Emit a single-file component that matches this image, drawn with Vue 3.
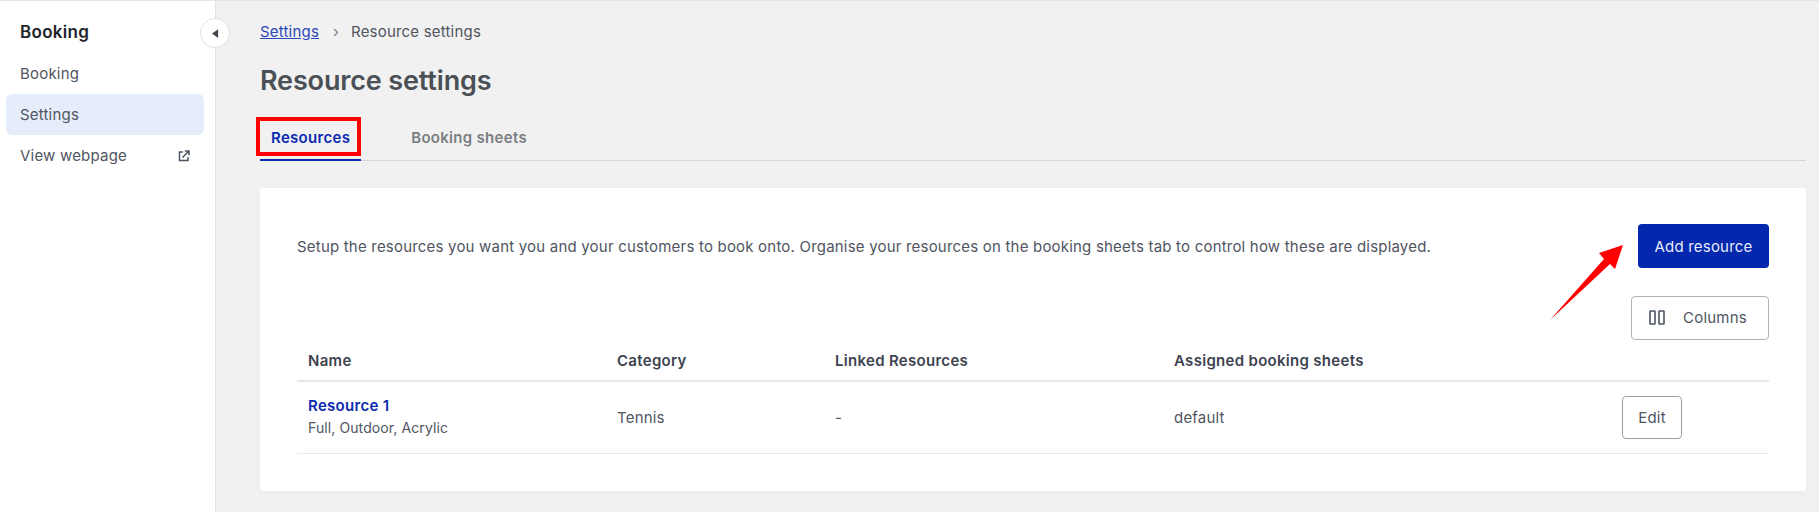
<script setup>
const navItems = [
  { label: 'Booking' },
  { label: 'Settings', active: true },
  { label: 'View webpage', external: true },
]
</script>

<template>
  <div class="page">
    <aside class="sidebar">
      <div class="side-title">Booking</div>
      <nav class="nav">
        <a v-for="item in navItems" :key="item.label" class="nav-item" :class="{ active: item.active }">
          <span>{{ item.label }}</span>
          <svg v-if="item.external" class="ext" viewBox="0 0 12 12" width="12" height="12">
            <path d="M5 2H1.5v8.5H10V7" fill="none" stroke="#4b5563" stroke-width="1.5" />
            <path d="M4.5 7.5 10.5 1.5M6.8 1h4.2v4.2" fill="none" stroke="#4b5563" stroke-width="1.5" />
          </svg>
        </a>
      </nav>
      <button class="collapse">
        <svg viewBox="0 0 8 10" width="7" height="9"><path d="M7 0v10L0 5z" fill="#3f4650" /></svg>
      </button>
    </aside>

    <main class="main">
      <div class="crumbs">
        <a class="crumb-link">Settings</a>
        <span class="sep">›</span>
        <span>Resource settings</span>
      </div>
      <h1>Resource settings</h1>

      <div class="tabs">
        <div class="tab current">
          Resources
          <span class="red-box"></span>
        </div>
        <div class="tab">Booking sheets</div>
      </div>

      <section class="card">
        <div class="intro">
          <p>Setup the resources you want you and your customers to book onto. Organise your resources on the booking sheets tab to control how these are displayed.</p>
          <button class="btn-primary">Add resource</button>
        </div>
        <div class="tools">
          <button class="btn-columns">
            <svg viewBox="0 0 16 15" width="16" height="15">
              <rect x="1" y="1" width="5" height="13" rx="0.5" fill="none" stroke="#4b5563" stroke-width="1.6" />
              <rect x="10" y="1" width="5" height="13" rx="0.5" fill="none" stroke="#4b5563" stroke-width="1.6" />
            </svg>
            <span>Columns</span>
          </button>
        </div>
        <table>
          <colgroup>
            <col class="c1" /><col class="c2" /><col class="c3" /><col class="c4" /><col />
          </colgroup>
          <thead>
            <tr>
              <th>Name</th>
              <th>Category</th>
              <th>Linked Resources</th>
              <th>Assigned booking sheets</th>
              <th></th>
            </tr>
          </thead>
          <tbody>
            <tr>
              <td class="name-cell">
                <a class="res-name">Resource 1</a>
                <div class="res-sub">Full, Outdoor, Acrylic</div>
              </td>
              <td>Tennis</td>
              <td>-</td>
              <td>default</td>
              <td class="edit-cell"><button class="btn-edit">Edit</button></td>
            </tr>
          </tbody>
        </table>
      </section>
    </main>

    <!-- annotation drawn on top of the screenshot -->
    <svg class="arrow" viewBox="0 0 90 90" width="90" height="90">
      <path d="M0 86 54 25 49 19 73 11 65 35 60 30Z" fill="#ff0000" />
    </svg>
  </div>
</template>

<style>
html, body {
  margin: 0;
  background: #f1f1f1;
}
</style>

<style scoped>
.page {
  position: relative;
  display: flex;
  height: 512px;
  box-sizing: border-box;
  border-top: 1px solid #e4e4e4;
  font-family: Inter, "Liberation Sans", sans-serif;
  font-size: 15px;
  letter-spacing: 0.2px;
  color: #50555f;
  background: #f1f1f1;
  overflow: hidden;
}
.sidebar {
  position: relative;
  flex: 0 0 215px;
  background: #fff;
  border-right: 1px solid #dfe3e8;
}
.side-title {
  padding: 21px 20px 0;
  font-size: 17px;
  line-height: 20px;
  font-weight: 600;
  letter-spacing: 0.3px;
  color: #20242a;
}
.nav {
  display: flex;
  flex-direction: column;
  margin-top: 11px;
  padding: 0 11px 0 6px;
}
.nav-item {
  display: flex;
  align-items: center;
  justify-content: space-between;
  height: 41px;
  padding: 0 14px;
  border-radius: 6px;
}
.nav-item.active {
  background: #e5ecfa;
}
.collapse {
  position: absolute;
  top: 17px;
  right: -15px;
  width: 30px;
  height: 30px;
  padding: 0;
  display: flex;
  align-items: center;
  justify-content: center;
  background: #fff;
  border: 1px solid #dfe3e8;
  border-radius: 50%;
}
.main {
  flex: 1;
  padding: 21px 13px 0 44px;
  min-width: 0;
}
.crumbs {
  display: flex;
  align-items: center;
  line-height: 20px;
}
.crumb-link {
  color: #2a47b8;
  text-decoration: underline;
}
.sep {
  margin: 0 12px 0 14px;
  color: #7b8088;
}
h1 {
  margin: 21px 0 0;
  font-size: 27px;
  line-height: 36px;
  font-weight: 600;
  letter-spacing: -0.15px;
  color: #4a5055;
}
.tabs {
  display: flex;
  margin-top: 18px;
  border-bottom: 1px solid #d4d6da;
}
.tab {
  position: relative;
  padding: 0 34px 0 11px;
  height: 44px;
  line-height: 41px;
  font-weight: 600;
  letter-spacing: 0.3px;
  color: #7a7d82;
  margin-bottom: -1px;
  box-sizing: border-box;
}
.tab + .tab {
  padding-left: 16px;
}
.tab.current {
  padding-right: 11px;
  margin-right: 34px;
  color: #0a2bb0;
  border-bottom: 2px solid #0a2bb0;
}
.red-box {
  position: absolute;
  left: -4px;
  top: 0;
  right: 0;
  height: 39px;
  box-sizing: border-box;
  border: 4px solid #f00;
}
.card {
  margin-top: 27px;
  height: 303px;
  box-sizing: border-box;
  padding: 36px 37px 0;
  background: #fff;
  border-radius: 4px;
  box-shadow: 0 4px 12px rgba(0, 0, 0, 0.025);
}
.intro {
  display: flex;
  align-items: center;
  justify-content: space-between;
}
.intro p {
  margin: 0;
}
button {
  font: inherit;
  letter-spacing: inherit;
  cursor: pointer;
}
.btn-primary {
  width: 131px;
  height: 44px;
  background: #0327ad;
  color: #e6eaf8;
  border: none;
  border-radius: 4px;
}
.tools {
  display: flex;
  justify-content: flex-end;
  margin-top: 28px;
}
.btn-columns {
  display: flex;
  align-items: center;
  justify-content: center;
  gap: 18px;
  width: 138px;
  height: 44px;
  padding: 0 4px 1px 0;
  background: #fff;
  color: #50555f;
  border: 1px solid #b0b3bd;
  border-radius: 4px;
}
table {
  width: 100%;
  border-collapse: collapse;
  table-layout: fixed;
}
.c1 { width: 309px; }
.c2 { width: 218px; }
.c3 { width: 339px; }
.c4 { width: 459px; }
th {
  height: 40px;
  padding: 0 0 0 11px;
  text-align: left;
  font-weight: 600;
  letter-spacing: 0.3px;
  color: #3e4350;
  border-bottom: 2px solid #e6e7ec;
}
td {
  height: 71px;
  padding: 0 0 0 11px;
  border-bottom: 1px solid #e8e9ed;
}
.name-cell {
  height: 69px;
  padding-bottom: 2px;
}
.res-name {
  display: block;
  font-weight: 600;
  letter-spacing: 0.3px;
  line-height: 20px;
  color: #0a2bb0;
}
.res-sub {
  margin-top: 2px;
  font-size: 14px;
  letter-spacing: 0.1px;
  line-height: 20px;
}
.edit-cell {
  padding: 0;
}
.btn-edit {
  display: block;
  width: 60px;
  height: 43px;
  background: #fff;
  color: #50555f;
  border: 1px solid #9c9ea6;
  border-radius: 4px;
}
.arrow {
  position: absolute;
  left: 1550px;
  top: 233px;
}
</style>
